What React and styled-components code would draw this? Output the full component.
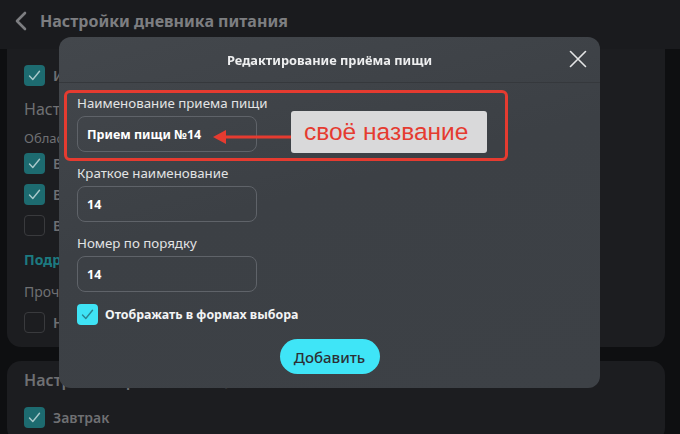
import styled, { createGlobalStyle } from "styled-components";

const GlobalStyle = createGlobalStyle`
    html, body {
        margin: 0;
        padding: 0;
        background: #0e0f11;
        font-family: "Noto Sans", "Open Sans", sans-serif;
        overflow: hidden;
    }
`;

const CheckIcon = ({ color }) => (
    <svg width="13" height="11" viewBox="0 0 13 11" fill="none">
        <path d="M1.5 6 L4.8 9.5 L11.5 1.2" stroke={color} strokeWidth="1.4" strokeLinecap="round" strokeLinejoin="round" />
    </svg>
);

const App = () => {
    return (
        <>
            <GlobalStyle />
            <Page>
                <TopBar>
                    <BackIcon viewBox="0 0 14 20" fill="none">
                        <path d="M11 2 L3 10 L11 18" stroke="#7d7e81" strokeWidth="2.6" strokeLinecap="round" strokeLinejoin="round" />
                    </BackIcon>
                    <PageTitle>Настройки дневника питания</PageTitle>
                </TopBar>
                <Content>
                    <Card $flatTop>
                        <BgRow>
                            <BgCheck $checked><CheckIcon color="#a9c9cb" /></BgCheck>
                            <BgText>Использовать дневник питания</BgText>
                        </BgRow>
                        <BgHeading>Настройки отображения</BgHeading>
                        <BgSmall>Области отображения</BgSmall>
                        <BgList>
                            <BgRow>
                                <BgCheck $checked><CheckIcon color="#a9c9cb" /></BgCheck>
                                <BgText>В дневнике</BgText>
                            </BgRow>
                            <BgRow>
                                <BgCheck $checked><CheckIcon color="#a9c9cb" /></BgCheck>
                                <BgText>В отчётах</BgText>
                            </BgRow>
                            <BgRow>
                                <BgCheck />
                                <BgText>В статистике</BgText>
                            </BgRow>
                        </BgList>
                        <BgLink>Подробнее</BgLink>
                        <BgPlain>Прочие настройки</BgPlain>
                        <BgRow>
                            <BgCheck />
                            <BgText>Не показывать подсказки</BgText>
                        </BgRow>
                    </Card>
                    <Card>
                        <BgCardTitle>Настройки приёмов пищи</BgCardTitle>
                        <BgRow>
                            <BgCheck $checked><CheckIcon color="#a9c9cb" /></BgCheck>
                            <BgText>Завтрак</BgText>
                        </BgRow>
                    </Card>
                </Content>
            </Page>

            <Overlay>
                <Modal>
                    <ModalHeader>
                        <ModalTitle>Редактирование приёма пищи</ModalTitle>
                        <CloseButton>
                            <svg width="18" height="18" viewBox="0 0 18 18" fill="none">
                                <path d="M1.5 1.5 L16.5 16.5 M16.5 1.5 L1.5 16.5" stroke="#e4e5e6" strokeWidth="1.6" strokeLinecap="round" />
                            </svg>
                        </CloseButton>
                    </ModalHeader>
                    <ModalBody>
                        <Highlight>
                            <Field>
                                <Label>Наименование приема пищи</Label>
                                <Input>Прием пищи №14</Input>
                            </Field>
                            <Arrow viewBox="0 0 80 16" fill="none">
                                <path d="M8 8 L79 8" stroke="#e53b30" strokeWidth="3" />
                                <path d="M0 8 L13 1 L13 15 Z" fill="#e53b30" />
                            </Arrow>
                            <Callout>своё название</Callout>
                        </Highlight>
                        <Field>
                            <Label>Краткое наименование</Label>
                            <Input>14</Input>
                        </Field>
                        <Field>
                            <Label>Номер по порядку</Label>
                            <Input>14</Input>
                        </Field>
                        <CheckRow>
                            <Checkbox><CheckIcon color="#2a8490" /></Checkbox>
                            <CheckLabel>Отображать в формах выбора</CheckLabel>
                        </CheckRow>
                        <ButtonRow>
                            <PrimaryButton>Добавить</PrimaryButton>
                        </ButtonRow>
                    </ModalBody>
                </Modal>
            </Overlay>
        </>
    );
};

export default App;

const Page = styled.div`
    width: 680px;
    height: 434px;
    display: flex;
    flex-direction: column;
    background: #0e0f11;
`;

const TopBar = styled.div`
    height: 49px;
    box-sizing: border-box;
    flex-shrink: 0;
    display: flex;
    align-items: center;
    gap: 12px;
    padding: 0 0 7px 14px;
    background: #1a1b1e;
`;

const BackIcon = styled.svg`
    width: 14px;
    height: 20px;
`;

const PageTitle = styled.div`
    font-size: 16px;
    font-weight: 700;
    color: #7d7e81;
`;

const Content = styled.div`
    display: flex;
    flex-direction: column;
    gap: 14px;
    padding: 0 15px 0 7px;
`;

const Card = styled.div`
    background: #1c1d20;
    border-radius: ${(p) => (p.$flatTop ? "0 0 14px 14px" : "14px")};
    padding: ${(p) => (p.$flatTop ? "16px 17px 14px" : "8px 17px 14px")};
    display: flex;
    flex-direction: column;
`;

const BgRow = styled.div`
    display: flex;
    align-items: center;
    gap: 8px;
    height: 21px;
`;

const BgCheck = styled.div`
    width: 21px;
    height: 21px;
    box-sizing: border-box;
    border-radius: 4px;
    display: flex;
    align-items: center;
    justify-content: center;
    background: ${(p) => (p.$checked ? "#1d6b70" : "transparent")};
    border: ${(p) => (p.$checked ? "none" : "1px solid #393a3d")};
`;

const BgText = styled.div`
    font-size: 14px;
    font-weight: 600;
    color: #6f7073;
    white-space: nowrap;
`;

const BgHeading = styled.div`
    margin-top: 12px;
    font-size: 16px;
    color: #6f7073;
    line-height: 22px;
`;

const BgSmall = styled.div`
    margin-top: 9px;
    font-size: 13px;
    color: #6f7073;
    line-height: 18px;
`;

const BgList = styled.div`
    margin-top: 6px;
    display: flex;
    flex-direction: column;
    gap: 10px;
`;

const BgLink = styled.div`
    margin-top: 14px;
    font-size: 14px;
    font-weight: 700;
    color: #1c7a80;
    line-height: 20px;
`;

const BgPlain = styled.div`
    margin-top: 12px;
    font-size: 14px;
    color: #6f7073;
    line-height: 20px;
    margin-bottom: 10px;
`;

const BgCardTitle = styled.div`
    font-size: 16px;
    font-weight: 600;
    color: #6f7073;
    line-height: 22px;
    margin-bottom: 16px;
`;

const Overlay = styled.div`
    position: fixed;
    inset: 0;
`;

const Modal = styled.div`
    position: absolute;
    left: 59px;
    top: 37px;
    width: 541px;
    height: 351px;
    box-sizing: border-box;
    border-radius: 12px;
    background: linear-gradient(165deg, #43474c 0%, #3c4045 45%, #3d4146 100%);
    display: flex;
    flex-direction: column;
`;

const ModalHeader = styled.div`
    position: relative;
    height: 45px;
    flex-shrink: 0;
    display: flex;
    align-items: center;
    justify-content: center;
    border-bottom: 1px solid #35383c;
`;

const ModalTitle = styled.div`
    font-size: 12.8px;
    font-weight: 700;
    color: #eeeff0;
`;

const CloseButton = styled.div`
    position: absolute;
    right: 13px;
    top: 13px;
    width: 18px;
    height: 18px;
    display: flex;
`;

const ModalBody = styled.div`
    padding: 7px 18px 0;
    display: flex;
    flex-direction: column;
    gap: 12px;
`;

const Highlight = styled.div`
    position: relative;
    margin-left: -13px;
    width: 444px;
    box-sizing: border-box;
    height: 71px;
    border: 3px solid #e53b30;
    border-radius: 6px;
    padding: 1px 10px 0;
    margin-bottom: -9px;
`;

const Field = styled.div`
    display: flex;
    flex-direction: column;
    gap: 4px;
`;

const Label = styled.div`
    font-size: 13.3px;
    line-height: 18px;
    color: #e2e3e4;
`;

const Input = styled.div`
    width: 180px;
    height: 36px;
    box-sizing: border-box;
    border: 1px solid #5f6369;
    border-radius: 8px;
    padding: 0 9px;
    display: flex;
    align-items: center;
    font-size: 12.5px;
    font-weight: 700;
    color: #ffffff;
`;

const Arrow = styled.svg`
    position: absolute;
    left: 146px;
    top: 36px;
    width: 80px;
    height: 16px;
`;

const Callout = styled.div`
    position: absolute;
    left: 224px;
    top: 18px;
    width: 196px;
    height: 42px;
    box-sizing: border-box;
    background: #d9d9da;
    border-radius: 3px;
    padding-left: 13px;
    display: flex;
    align-items: center;
    font-family: "Liberation Sans", Arial, sans-serif;
    font-size: 24.5px;
    color: #e53b30;
`;

const CheckRow = styled.div`
    display: flex;
    align-items: center;
    gap: 7px;
`;

const Checkbox = styled.div`
    width: 21px;
    height: 21px;
    border-radius: 4px;
    background: #3fe3f5;
    display: flex;
    align-items: center;
    justify-content: center;
`;

const CheckLabel = styled.div`
    font-size: 12.4px;
    font-weight: 700;
    color: #f3f4f5;
`;

const ButtonRow = styled.div`
    display: flex;
    justify-content: center;
    margin-top: 2px;
`;

const PrimaryButton = styled.button`
    width: 100px;
    height: 35px;
    border: none;
    border-radius: 18px;
    background: #3fe5f7;
    font-family: "Noto Sans", sans-serif;
    font-size: 15px;
    font-weight: 500;
    color: #2c3035;
    cursor: pointer;
`;
